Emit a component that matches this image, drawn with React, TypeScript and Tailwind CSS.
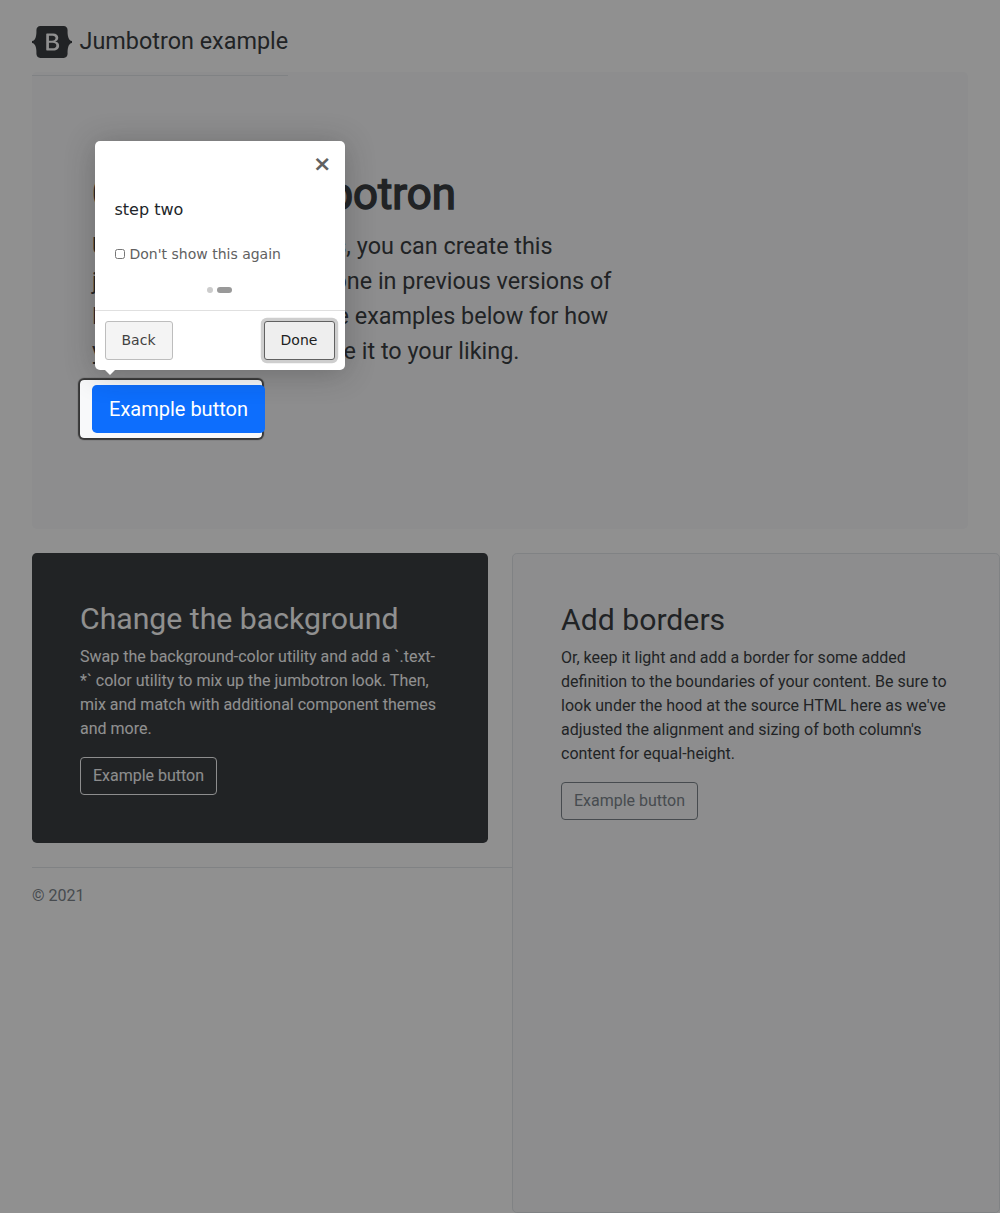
function Logo() {
  return (
    <svg width="40" height="32" viewBox="0 0 118 94" className="mr-[7.5px] shrink-0" role="img" aria-label="Bootstrap">
      <path
        fillRule="evenodd"
        clipRule="evenodd"
        fill="currentColor"
        d="M24.509 0c-6.733 0-11.715 5.893-11.492 12.284.214 6.14-.064 14.092-2.066 20.577C8.943 39.365 5.547 43.485 0 44.014v5.972c5.547.529 8.943 4.649 10.951 11.153 2.002 6.485 2.28 14.437 2.066 20.577C12.794 88.106 17.776 94 24.51 94H93.5c6.733 0 11.714-5.893 11.491-12.284-.214-6.14.064-14.092 2.066-20.577 2.009-6.504 5.396-10.624 10.943-11.153v-5.972c-5.547-.529-8.934-4.649-10.943-11.153-2.002-6.484-2.28-14.437-2.066-20.577C105.214 5.894 100.233 0 93.5 0H24.508zM80 57.863C80 66.663 73.436 72 62.543 72H44a2 2 0 01-2-2V24a2 2 0 012-2h18.437c9.083 0 15.044 4.92 15.044 12.474 0 5.302-4.01 10.049-9.119 10.88v.277C75.317 46.394 80 51.21 80 57.863zM60.521 28.34H49.948v14.934h8.905c6.884 0 10.68-2.772 10.68-7.727 0-4.643-3.264-7.207-9.012-7.207zM49.948 49.2v16.458H60.91c7.167 0 10.964-2.876 10.964-8.281 0-5.406-3.903-8.178-11.425-8.178H49.948z"
      />
    </svg>
  );
}

function StepTooltip() {
  return (
    <div className="absolute -top-[244px] left-[3px] z-20 flex h-[229px] w-[250px] flex-col rounded-[5px] bg-white font-['DejaVu_Sans',sans-serif] text-[#212529] shadow-[0_3px_30px_rgba(33,33,33,0.3)]">
      <div className="flex h-[46px] justify-end pr-[13.5px]">
        <button className="h-[46px] text-[22px] leading-[46px] font-bold text-[#616161]">×</button>
      </div>
      <div className="pt-[11px] pr-5 pl-[19.5px] text-[16px] leading-6">step two</div>
      <label className="mt-[22px] flex h-5 items-center px-5 text-[14px] leading-5 text-[#616161]">
        <span className="mr-[4.5px] h-[10px] w-[10px] rounded-[2.5px] border border-[#767676] bg-white" />
        Don't show this again
      </label>
      <div className="mt-[23px] flex justify-center gap-1 pr-px">
        <span className="h-1.5 w-1.5 rounded-full bg-[#ccc]" />
        <span className="h-1.5 w-[15px] rounded-full bg-[#999]" />
      </div>
      <div className="mt-auto flex h-[60px] justify-between border-t border-[#e0e0e0] p-[10px] text-[14px] [text-shadow:1px_1px_0_#fff]">
        <button className="h-[39px] w-[68px] rounded-[3px] border border-[#bdbdbd] bg-[#f4f4f4] pr-px text-[#424242]">
          Back
        </button>
        <button className="h-[39px] w-[71px] rounded-[3px] border border-[#616161] bg-[#eee] pr-px text-[#212121] shadow-[0_0_0_3.2px_rgba(158,158,158,0.5)]">
          Done
        </button>
      </div>
      <span className="absolute top-full left-[10px] border-[5px] border-transparent border-t-white" />
    </div>
  );
}

export default function App() {
  return (
    <main className="h-[1213px] w-[1000px] overflow-hidden bg-white pt-6 pl-8 font-[Roboto,sans-serif] text-[16px] leading-6 text-[#212529]">
      <header className="relative z-0 h-12">
        <a className="flex w-[256px] items-center border-b border-[#dee2e6] pb-4">
          <Logo />
          <span className="text-[23.4px] leading-[35.1px] whitespace-nowrap">Jumbotron example</span>
        </a>
      </header>

      <section className="mr-8 mb-6 h-[457px] rounded-[4.8px] bg-[#f8f9fa] px-[60px] py-24">
        <h1 className="mb-2 text-[43.8px] leading-[52.56px] font-normal [-webkit-text-stroke:1.5px_currentColor]">
          Custom jumbotron
        </h1>
        <p className="mb-4 w-[544px] text-[23.4px] leading-[35.1px]">
          Using a series of utilities, you can create this jumbotron, just like the one in previous versions of
          Bootstrap. Check out the examples below for how you can remix and restyle it to your liking.
        </p>
        <div className="relative w-fit">
          <span className="absolute -top-[5px] -left-3 z-10 h-[58px] w-[182px] rounded-[4px] shadow-[0_0_1px_2px_rgba(33,33,33,0.8),0_0_0_5000px_rgba(33,33,33,0.5)]" />
          <button className="relative z-10 block h-12 w-[173px] rounded-[4.8px] bg-[#0d6efd] text-[20px] leading-[30px] text-white">
            Example button
          </button>
          <StepTooltip />
        </div>
      </section>

      <div className="flex">
        <div className="w-[480px]">
          <section className="mr-6 h-[290px] rounded-[4.8px] bg-[#212529] p-12 text-white">
            <h2 className="mb-2 text-[30.2px] leading-[36.24px]">Change the background</h2>
            <p className="mb-4">
              Swap the background-color utility and add a `.text-*` color utility to mix up the jumbotron look. Then,
              mix and match with additional component themes and more.
            </p>
            <button className="h-[38px] w-[137px] rounded border border-[#f8f9fa] text-[#f8f9fa]">Example button</button>
          </section>
          <footer className="mt-6 border-t border-[#dee2e6] pt-4 text-[#6c757d]">© 2021</footer>
        </div>
        <section className="h-[660px] w-[488px] rounded-[4.8px] border border-[#dee2e6] bg-[#f8f9fa] p-12">
          <h2 className="mb-2 text-[30.2px] leading-[36.24px]">Add borders</h2>
          <p className="mb-4">
            Or, keep it light and add a border for some added definition to the boundaries of your content. Be sure to
            look under the hood at the source HTML here as we've adjusted the alignment and sizing of both column's
            content for equal-height.
          </p>
          <button className="h-[38px] w-[137px] rounded border border-[#6c757d] text-[#6c757d]">Example button</button>
        </section>
      </div>
    </main>
  );
}
